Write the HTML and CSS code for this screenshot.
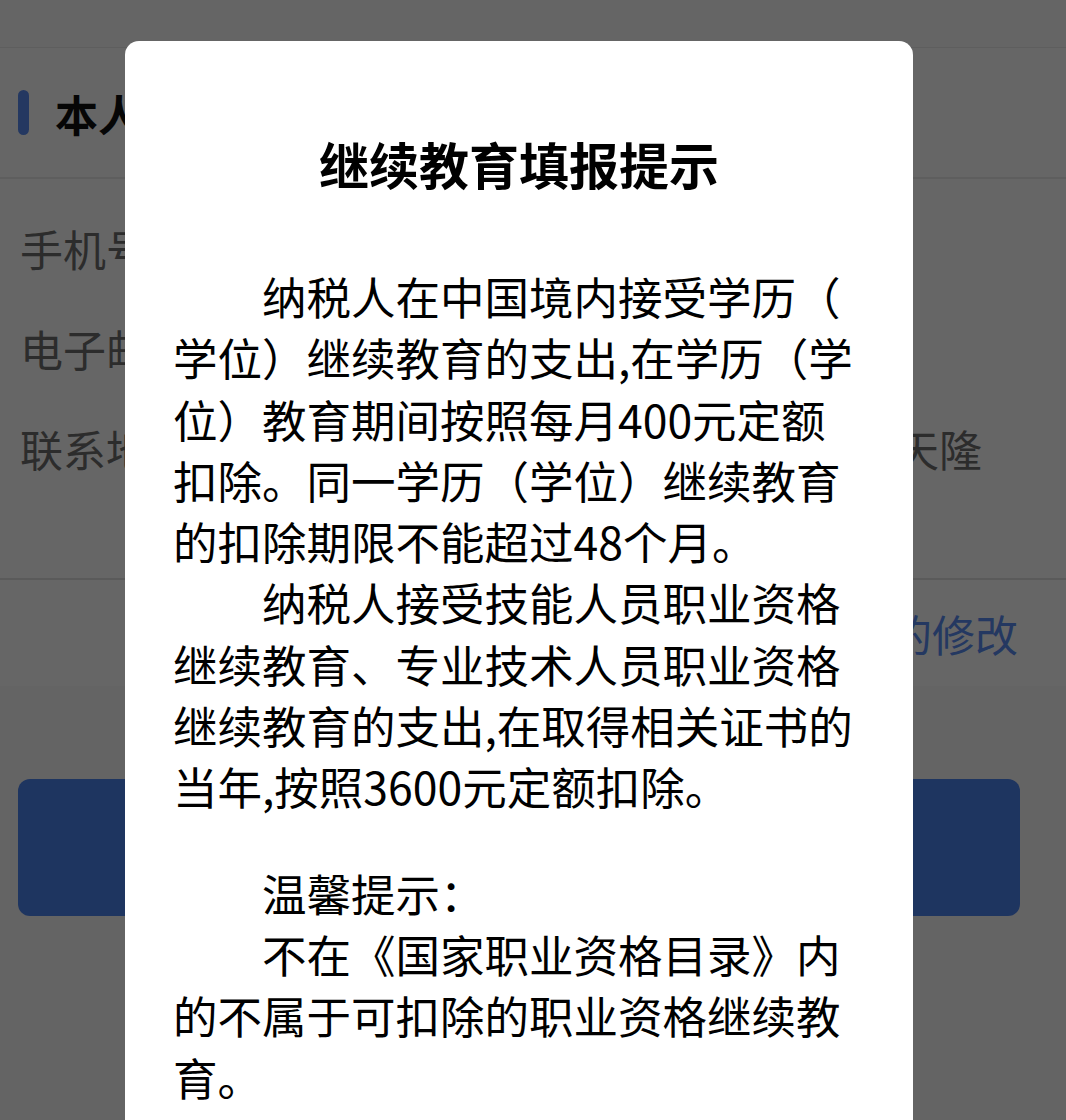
FILE: index.html
```html
<!DOCTYPE html>
<html lang="zh-CN">
<head>
<meta charset="utf-8">
<title>继续教育填报提示</title>
<link rel="stylesheet" href="styles.css">
</head>
<body>
<div class="page">
  <div class="navbar"></div>
  <div class="section-head">
    <span class="bar"></span>
    <span class="section-title">本人信息</span>
  </div>
  <div class="rows">
    <div class="row"><span class="label">手机号</span><span class="value"></span></div>
    <div class="row"><span class="label">电子邮箱</span><span class="value"></span></div>
    <div class="row"><span class="label">联系地址</span><span class="value">天隆</span></div>
  </div>
  <div class="action-row"><span class="link">的修改</span></div>
  <div class="btn-wrap"><div class="btn"></div></div>
</div>

<div class="mask"></div>

<div class="modal">
  <h1 class="modal-title">继续教育填报提示</h1>
  <div class="modal-body">
    <p class="para">纳税人在中国境内接受学历（学位）继续教育的支出,在学历（学位）教育期间按照每月400元定额扣除。同一学历（学位）继续教育的扣除期限不能超过48个月。</p>
    <p class="para">纳税人接受技能人员职业资格继续教育、专业技术人员职业资格继续教育的支出,在取得相关证书的当年,按照3600元定额扣除。</p>
    <p class="para blank"></p>
    <p class="para">温馨提示：</p>
    <p class="para">不在《国家职业资格目录》内的不属于可扣除的职业资格继续教育。</p>
  </div>
</div>
</body>
</html>
```

FILE: styles.css
```css
html, body {
  margin: 0;
  padding: 0;
}

body {
  width: 1066px;
  height: 1120px;
  overflow: hidden;
  background: #fafafa;
  font-family: "Noto Sans CJK SC", "Noto Sans", sans-serif;
  position: relative;
}

.page {
  width: 1066px;
}

.navbar {
  height: 47px;
  background: #fdfdfd;
  border-bottom: 1px solid #ececec;
}

.section-head {
  height: 129px;
  background: #ffffff;
  display: flex;
  align-items: center;
  padding-left: 18px;
  border-bottom: 2px solid #ebebeb;
}

.bar {
  width: 11px;
  height: 45px;
  border-radius: 6px;
  background: #5a8cf2;
  margin-right: 26px;
}

.section-title {
  font-size: 43px;
  font-weight: 700;
  color: #111;
}

.rows {
  background: #ffffff;
  padding: 19px 0 80px;
  border-bottom: 2px solid #e0e0e0;
}

.row {
  height: 100px;
  display: flex;
  align-items: center;
  justify-content: space-between;
  padding: 0 84px 0 20px;
  font-size: 43px;
  color: #6f6f6f;
}

.action-row {
  height: 106px;
  background: #ffffff;
  display: flex;
  align-items: center;
  justify-content: flex-end;
  padding-right: 48px;
}

.link {
  font-size: 43px;
  color: #5a8cf2;
}

.btn-wrap {
  padding: 93px 46px 0 18px;
}

.btn {
  height: 137px;
  border-radius: 12px;
  background: #4d84f0;
}

.mask {
  position: absolute;
  inset: 0;
  background: rgba(0, 0, 0, 0.6);
}

.modal {
  position: absolute;
  left: 125px;
  top: 41px;
  width: 788px;
  height: 1120px;
  background: #ffffff;
  border-radius: 14px;
  box-sizing: border-box;
  padding: 87px 52px 0 48px;
}

.modal-title {
  margin: 0 0 0 4px;
  font-size: 50px;
  line-height: 70px;
  font-weight: 700;
  text-align: center;
  color: #000;
}

.modal-body {
  margin-top: 67px;
}

.para {
  margin: 0;
  font-size: 44.5px;
  line-height: 61.3px;
  text-indent: 2em;
  color: #000;
  line-break: anywhere;
  text-spacing-trim: space-all;
}

.blank {
  height: 45px;
}
```
